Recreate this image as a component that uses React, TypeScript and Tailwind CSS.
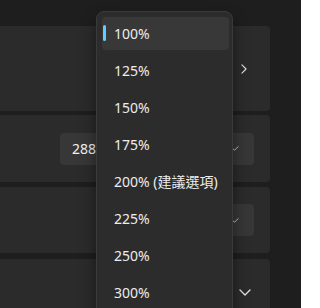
import React from 'react'

const items = ['100%', '125%', '150%', '175%', '200% (建議選項)', '225%', '250%', '300%']

function ChevronDown({ className }: { className?: string }) {
  return (
    <svg viewBox="0 0 12 7" className={className} fill="none">
      <path d="M1 1l5 5 5-5" stroke="currentColor" strokeWidth="1.3" strokeLinecap="round" strokeLinejoin="round" />
    </svg>
  )
}

function ChevronRight({ className }: { className?: string }) {
  return (
    <svg viewBox="0 0 7 12" className={className} fill="none">
      <path d="M1 1l5 5-5 5" stroke="currentColor" strokeWidth="1.3" strokeLinecap="round" strokeLinejoin="round" />
    </svg>
  )
}

export default function App() {
  return (
    <div
      className="relative h-[308px] w-[301px] overflow-hidden bg-[#1e1e1e]"
      style={{ fontFamily: '"Segoe UI", "Noto Sans", "Noto Sans CJK TC", sans-serif' }}
    >
      <div className="flex w-[270px] flex-col pt-[26px]">
        <div className="flex h-[85px] items-center justify-end rounded-r-[4px] bg-[#2b2b2b] pr-[23px]">
          <ChevronRight className="h-[10px] w-[6px] text-[#e6e6e6]" />
        </div>
        <div className="mt-[4px] flex h-[67px] items-center rounded-r-[4px] bg-[#2b2b2b]">
          <div className="ml-[60px] mr-[16px] flex h-[32px] flex-1 items-center rounded-[4px] bg-[#373737] pl-[12px] pr-[15px]">
            <span className="flex-1 text-[14px] text-[#f2f2f2]">2880</span>
            <ChevronDown className="h-[5px] w-[9px] text-[#cfcfcf]" />
          </div>
        </div>
        <div className="mt-[5px] flex h-[66px] items-center rounded-r-[4px] bg-[#2b2b2b]">
          <div className="ml-[120px] mr-[16px] flex h-[32px] flex-1 items-center justify-end rounded-[4px] bg-[#373737] pr-[15px]">
            <ChevronDown className="h-[5px] w-[9px] text-[#cfcfcf]" />
          </div>
        </div>
        <div className="mt-[6px] flex h-[70px] items-start justify-end rounded-tr-[4px] bg-[#2b2b2b] pr-[19px] pt-[30px]">
          <ChevronDown className="h-[7px] w-[12px] text-[#e6e6e6]" />
        </div>
      </div>

      <div className="absolute left-[96px] top-[11px] w-[137px] rounded-[8px] border border-[#3a3a3a] bg-[#2c2c2c] pb-[6px] pl-[5px] pr-[3px] pt-[5px] shadow-[0_8px_16px_rgba(0,0,0,0.45)]">
        <div className="flex flex-col gap-[4px]">
          {items.map((label, i) => (
            <div
              key={label}
              className={`relative flex h-[33px] items-center rounded-[4px] pl-[12px] text-[14px] text-[#ededed] ${i === 0 ? 'bg-[#383838]' : ''}`}
            >
              {i === 0 && <span className="absolute left-[1px] top-[8px] h-[16px] w-[3px] rounded-full bg-[#60cdff]" />}
              {label}
            </div>
          ))}
        </div>
      </div>
    </div>
  )
}
